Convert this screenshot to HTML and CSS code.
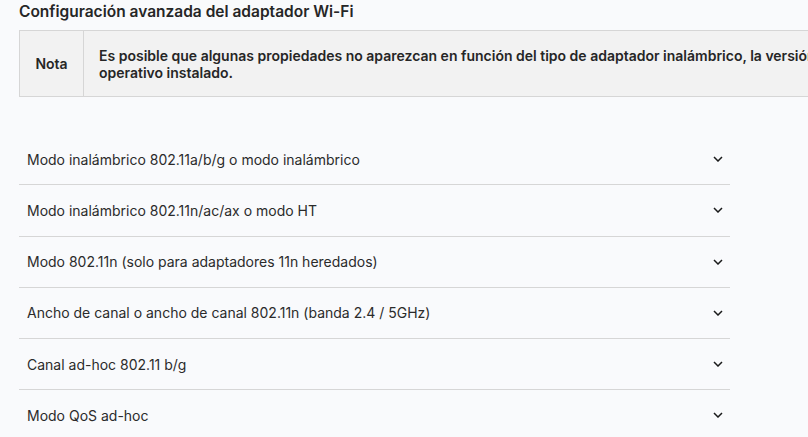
FILE: index.html
```html
<!DOCTYPE html>
<html lang="es">
<head>
<meta charset="utf-8">
<title>Configuración avanzada del adaptador Wi-Fi</title>
<link rel="stylesheet" href="styles.css">
</head>
<body>
<main class="page">
  <h2 class="title">Configuración avanzada del adaptador Wi-Fi</h2>
  <table class="note">
    <tr>
      <th class="note-label">Nota</th>
      <td class="note-text">Es posible que algunas propiedades no aparezcan en función del tipo de adaptador inalámbrico, la versión del controlador y el sistema operativo instalado.</td>
    </tr>
  </table>
  <ul class="accordion">
    <li class="item"><span>Modo inalámbrico 802.11a/b/g o modo inalámbrico</span><svg class="chev" viewBox="0 0 10 6" width="10" height="6"><path d="M1 1 L5 5 L9 1" /></svg></li>
    <li class="item"><span>Modo inalámbrico 802.11n/ac/ax o modo HT</span><svg class="chev" viewBox="0 0 10 6" width="10" height="6"><path d="M1 1 L5 5 L9 1" /></svg></li>
    <li class="item"><span>Modo 802.11n (solo para adaptadores 11n heredados)</span><svg class="chev" viewBox="0 0 10 6" width="10" height="6"><path d="M1 1 L5 5 L9 1" /></svg></li>
    <li class="item"><span>Ancho de canal o ancho de canal 802.11n (banda 2.4 / 5GHz)</span><svg class="chev" viewBox="0 0 10 6" width="10" height="6"><path d="M1 1 L5 5 L9 1" /></svg></li>
    <li class="item"><span>Canal ad-hoc 802.11 b/g</span><svg class="chev" viewBox="0 0 10 6" width="10" height="6"><path d="M1 1 L5 5 L9 1" /></svg></li>
    <li class="item"><span>Modo QoS ad-hoc</span><svg class="chev" viewBox="0 0 10 6" width="10" height="6"><path d="M1 1 L5 5 L9 1" /></svg></li>
  </ul>
</main>
</body>
</html>
```
FILE: styles.css
```css
html, body {
  margin: 0;
  padding: 0;
  background: #f9fafc;
  overflow: hidden;
}
body {
  font-family: Inter, "Noto Sans", "Liberation Sans", sans-serif;
  color: #2b2b2b;
}
.page {
  padding: 0 0 0 19px;
  width: 1200px;
}
.title {
  margin: 0;
  padding-top: 2px;
  font-size: 15.5px;
  line-height: 20px;
  font-weight: 600;
  color: #262626;
}
.note {
  margin-top: 8px;
  border-collapse: collapse;
  background: #f2f2f2;
  width: 1050px;
}
.note th, .note td {
  border: 1px solid #d6d6d6;
}
.note-label {
  width: 64px;
  box-sizing: border-box;
  font-size: 14px;
  font-weight: 600;
  color: #262626;
  text-align: center;
  padding: 0;
}
.note-text {
  padding: 16px 16px 15px 15px;
  font-size: 14px;
  line-height: 17px;
  font-weight: 600;
  color: #262626;
}
.accordion {
  list-style: none;
  margin: 37px 0 0 0;
  padding: 0;
  width: 711px;
}
.item {
  display: flex;
  align-items: center;
  justify-content: space-between;
  height: 50.25px;
  padding: 0 7px 0 8px;
  border-bottom: 1px solid #d6d6d6;
  font-size: 14px;
  color: #2b2b2b;
}
.chev {
  fill: none;
  stroke: #1a1a1a;
  stroke-width: 1.5;
}
```
